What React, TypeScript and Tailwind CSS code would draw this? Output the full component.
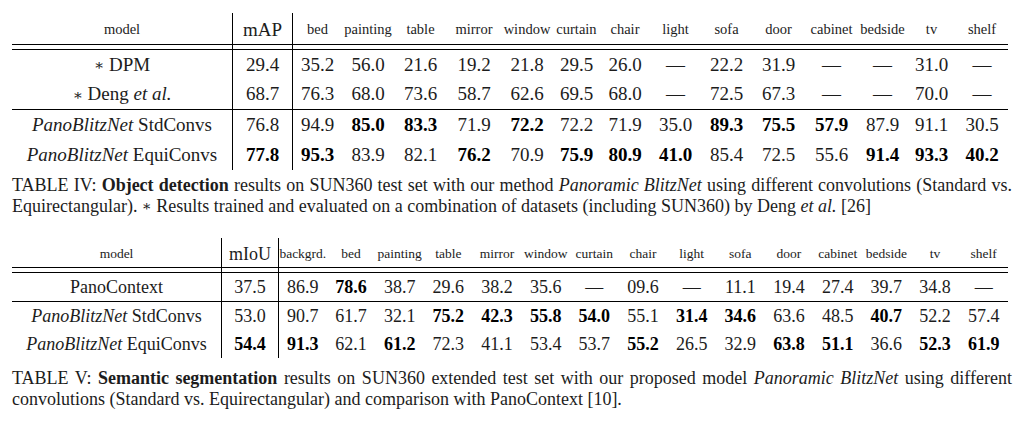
import type { ReactNode } from "react"

type V = string | { v: string; b: true }

const T1_COLS = "grid-cols-[220px_60px_50px_52px_53px_54px_52px_47px_50px_51px_51px_53px_53px_49px_49px_52px]"
const T2_COLS = "grid-cols-[209px_57px_repeat(15,1fr)]"

const B = (v: string): V => ({ v, b: true })
const D = "—"

const T1_HEAD = ["bed", "painting", "table", "mirror", "window", "curtain", "chair", "light", "sofa", "door", "cabinet", "bedside", "tv", "shelf"]
const T2_HEAD = ["backgrd.", "bed", "painting", "table", "mirror", "window", "curtain", "chair", "light", "sofa", "door", "cabinet", "bedside", "tv", "shelf"]

const Star = () => <span className="font-['DejaVu_Serif',serif] text-[0.8em] relative top-[-0.05em]">∗</span>

const Pano = ({ name }: { name: string }) => (
  <span>
    <i>PanoBlitzNet</i> {name}
  </span>
)

function Row({
  cols,
  h,
  model,
  score,
  values,
  size,
}: {
  cols: string
  h: string
  model: ReactNode
  score: V
  values: V[]
  size: string
}) {
  const cell = (x: V, i: number, border: boolean) => {
    const bold = typeof x !== "string"
    const text = typeof x === "string" ? x : x.v
    return (
      <div
        key={i}
        className={`flex items-center justify-center whitespace-nowrap ${border ? "border-l border-black" : ""} ${bold ? "font-bold text-black" : ""}`}
      >
        {text}
      </div>
    )
  }
  return (
    <div className={`grid ${cols} ${h} ${size} text-[#1c1c1c]`}>
      <div className="flex items-center justify-center whitespace-nowrap">{model}</div>
      {cell(score, -1, true)}
      {values.map((x, i) => cell(x, i, i === 0))}
    </div>
  )
}

function Gap({ cols, n }: { cols: string; n: number }) {
  return (
    <div className={`grid ${cols} h-[4px]`}>
      <div />
      <div className="border-l border-black" />
      <div className="border-l border-black" />
      {Array.from({ length: n - 1 }).map((_, i) => (
        <div key={i} />
      ))}
    </div>
  )
}

function Header({
  cols,
  h,
  metric,
  labels,
  small,
  big,
}: {
  cols: string
  h: string
  metric: string
  labels: string[]
  small: string
  big: string
}) {
  return (
    <div className={`grid ${cols} ${h} text-[#1c1c1c]`}>
      <div className={`flex items-center justify-center pt-[3px] ${small}`}>model</div>
      <div className={`flex items-center justify-center pt-[3px] border-l border-black ${big}`}>{metric}</div>
      {labels.map((l, i) => (
        <div
          key={l + i}
          className={`flex items-center justify-center pt-[3px] whitespace-nowrap ${small} ${i === 0 ? "border-l border-black" : ""}`}
        >
          {l}
        </div>
      ))}
    </div>
  )
}

const Rule = () => <div className="h-px bg-black" />

export default function App() {
  return (
    <div className="w-[1024px] h-[425px] bg-white px-[12px] pt-[13px] font-['Liberation_Serif',serif] text-[#1c1c1c]">
      {/* Table IV */}
      <div className="w-[996px]">
        <Header cols={T1_COLS} h="h-[31px]" metric="mAP" labels={T1_HEAD} small="text-[14.5px]" big="text-[19px]" />
        <Rule />
        <Gap cols={T1_COLS} n={14} />
        <Rule />
        <Row
          cols={T1_COLS}
          h="h-[30px]"
          size="text-[19px]"
          model={<span><Star /> DPM</span>}
          score="29.4"
          values={["35.2", "56.0", "21.6", "19.2", "21.8", "29.5", "26.0", D, "22.2", "31.9", D, D, "31.0", D]}
        />
        <Row
          cols={T1_COLS}
          h="h-[29px]"
          size="text-[19px]"
          model={<span><Star /> Deng <i>et al.</i></span>}
          score="68.7"
          values={["76.3", "68.0", "73.6", "58.7", "62.6", "69.5", "68.0", D, "72.5", "67.3", D, D, "70.0", D]}
        />
        <Rule />
        <Row
          cols={T1_COLS}
          h="h-[30px]"
          size="text-[19px]"
          model={<Pano name="StdConvs" />}
          score="76.8"
          values={["94.9", B("85.0"), B("83.3"), "71.9", B("72.2"), "72.2", "71.9", "35.0", B("89.3"), B("75.5"), B("57.9"), "87.9", "91.1", "30.5"]}
        />
        <Row
          cols={T1_COLS}
          h="h-[30px]"
          size="text-[19px]"
          model={<Pano name="EquiConvs" />}
          score={B("77.8")}
          values={[B("95.3"), "83.9", "82.1", B("76.2"), "70.9", B("75.9"), B("80.9"), B("41.0"), "85.4", "72.5", "55.6", B("91.4"), B("93.3"), B("40.2")]}
        />
      </div>

      <div className="mt-[5px] text-[18px] leading-[21px]">
        <p className="text-justify [text-align-last:justify]">
          TABLE IV: <b>Object detection</b> results on SUN360 test set with our method <i>Panoramic BlitzNet</i> using different convolutions (Standard vs.
        </p>
        <p>
          Equirectangular). <Star /> Results trained and evaluated on a combination of datasets (including SUN360) by Deng <i>et al.</i> [26]
        </p>
      </div>

      {/* Table V */}
      <div className="w-[996px] mt-[20px]">
        <Header cols={T2_COLS} h="h-[29px]" metric="mIoU" labels={T2_HEAD} small="text-[13.5px]" big="text-[18px]" />
        <Rule />
        <Gap cols={T2_COLS} n={15} />
        <Rule />
        <Row
          cols={T2_COLS}
          h="h-[28px]"
          size="text-[18px]"
          model="PanoContext"
          score="37.5"
          values={["86.9", B("78.6"), "38.7", "29.6", "38.2", "35.6", D, "09.6", D, "11.1", "19.4", "27.4", "39.7", "34.8", D]}
        />
        <Rule />
        <Row
          cols={T2_COLS}
          h="h-[28px]"
          size="text-[18px]"
          model={<Pano name="StdConvs" />}
          score="53.0"
          values={["90.7", "61.7", "32.1", B("75.2"), B("42.3"), B("55.8"), B("54.0"), "55.1", B("31.4"), B("34.6"), "63.6", "48.5", B("40.7"), "52.2", "57.4"]}
        />
        <Row
          cols={T2_COLS}
          h="h-[28px]"
          size="text-[18px]"
          model={<Pano name="EquiConvs" />}
          score={B("54.4")}
          values={[B("91.3"), "62.1", B("61.2"), "72.3", "41.1", "53.4", "53.7", B("55.2"), "26.5", "32.9", B("63.8"), B("51.1"), "36.6", B("52.3"), B("61.9")]}
        />
      </div>

      <div className="mt-[10px] text-[18px] leading-[21px]">
        <p className="text-justify [text-align-last:justify]">
          TABLE V: <b>Semantic segmentation</b> results on SUN360 extended test set with our proposed model <i>Panoramic BlitzNet</i> using different
        </p>
        <p>convolutions (Standard vs. Equirectangular) and comparison with PanoContext [10].</p>
      </div>
    </div>
  )
}
